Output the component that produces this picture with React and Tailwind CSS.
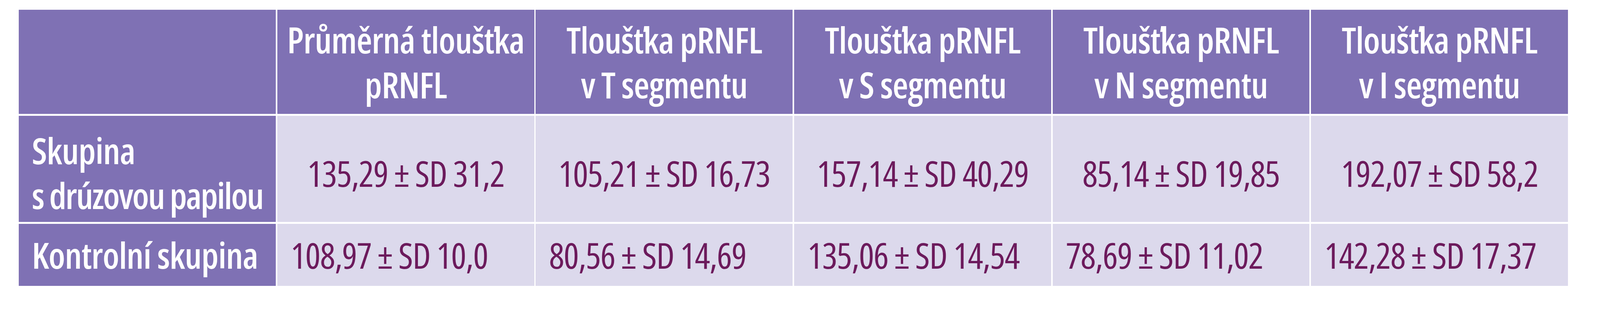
import React from 'react'

const headers = [
  ['Průměrná tloušťka', 'pRNFL'],
  ['Tloušťka pRNFL', 'v T segmentu'],
  ['Tloušťka pRNFL', 'v S segmentu'],
  ['Tloušťka pRNFL', 'v N segmentu'],
  ['Tloušťka pRNFL', 'v I segmentu'],
]

const drusen = [
  '135,29 ± SD 31,2',
  '105,21 ± SD 16,73',
  '157,14 ± SD 40,29',
  '85,14 ± SD 19,85',
  '192,07 ± SD 58,2',
]

const control = [
  '108,97 ± SD 10,0',
  '80,56 ± SD 14,69',
  '135,06 ± SD 14,54',
  '78,69 ± SD 11,02',
  '142,28 ± SD 17,37',
]

export default function App() {
  return (
    <main className="h-[800px] w-full bg-white pt-[25px] pl-[1.18vw] font-['Open_Sans',sans-serif] font-stretch-condensed">
      <div className="grid w-[96.82vw] grid-cols-6 grid-rows-[267px_272px_159px] gap-x-[0.09vw] gap-y-[5px] text-[92px] leading-[115px]">
        {/* header row */}
        <div className="bg-[#7f71b4]" />
        {headers.map((h, i) => (
          <div
            key={i}
            className="flex flex-col items-center justify-center bg-[#7f71b4] text-center font-semibold tracking-[-1px] whitespace-nowrap text-white"
          >
            <span>{h[0]}</span>
            <span>{h[1]}</span>
          </div>
        ))}

        {/* drusen group */}
        <div className="flex flex-col justify-center bg-[#7f71b4] pt-[20px] pl-[0.81vw] font-semibold tracking-[-1px] whitespace-nowrap text-white">
          <span>Skupina</span>
          <span className="tracking-[-2.5px]">s drúzovou papilou</span>
        </div>
        {drusen.map((v, i) => (
          <div key={i} className="flex items-center justify-center bg-[#dcd9ec] pt-[20px] tracking-[-1.5px] whitespace-nowrap text-[#6c1a5c]">
            {v}
          </div>
        ))}

        {/* control group */}
        <div className="flex items-center bg-[#7f71b4] pl-[0.81vw] font-semibold tracking-[-1px] whitespace-nowrap text-white">
          Kontrolní skupina
        </div>
        {control.map((v, i) => (
          <div key={i} className="flex items-center bg-[#dcd9ec] pl-[0.83vw] tracking-[-1.5px] whitespace-nowrap text-[#6c1a5c]">
            {v}
          </div>
        ))}
      </div>
    </main>
  )
}
